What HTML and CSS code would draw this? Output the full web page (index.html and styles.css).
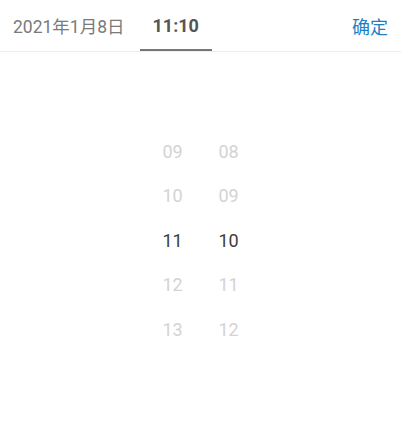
FILE: index.html
```html
<!DOCTYPE html>
<html lang="zh">
<head>
<meta charset="utf-8">
<link rel="stylesheet" href="styles.css">
</head>
<body>
<div class="header">
  <div class="tabs">
    <div class="tab">2021年1月8日</div>
    <div class="tab active">11:10</div>
  </div>
  <div class="confirm">确定</div>
</div>
<div class="picker">
  <div class="col">
    <div class="item">09</div>
    <div class="item">10</div>
    <div class="item sel">11</div>
    <div class="item">12</div>
    <div class="item">13</div>
  </div>
  <div class="col">
    <div class="item">08</div>
    <div class="item">09</div>
    <div class="item sel">10</div>
    <div class="item">11</div>
    <div class="item">12</div>
  </div>
</div>
</body>
</html>
```
FILE: styles.css
```css
html, body {
  margin: 0;
  padding: 0;
  background: #fff;
  font-family: Roboto, "Noto Sans CJK SC", sans-serif;
}
.header {
  height: 51px;
  border-bottom: 1px solid #ececec;
  display: flex;
  align-items: stretch;
  justify-content: space-between;
  padding: 0 13px;
}
.tabs {
  display: flex;
  align-items: stretch;
}
.tab {
  display: flex;
  align-items: center;
  font-size: 17.5px;
  color: #7a7a7a;
  padding-right: 15px;
}
.tab.active {
  font-weight: bold;
  font-size: 18px;
  color: #555;
  padding: 1px 13px 0;
  border-bottom: 2px solid #777;
  height: 48px;
}
.confirm {
  display: flex;
  align-items: center;
  font-size: 18px;
  color: #1d80c3;
}
.picker {
  display: flex;
  justify-content: center;
  margin-top: 77px;
}
.col {
  width: 56px;
  display: flex;
  flex-direction: column;
}
.item {
  height: 44.5px;
  display: flex;
  align-items: center;
  justify-content: center;
  font-size: 18px;
  color: #d3d3d3;
}
.item.sel {
  color: #3d3d3d;
}
```
